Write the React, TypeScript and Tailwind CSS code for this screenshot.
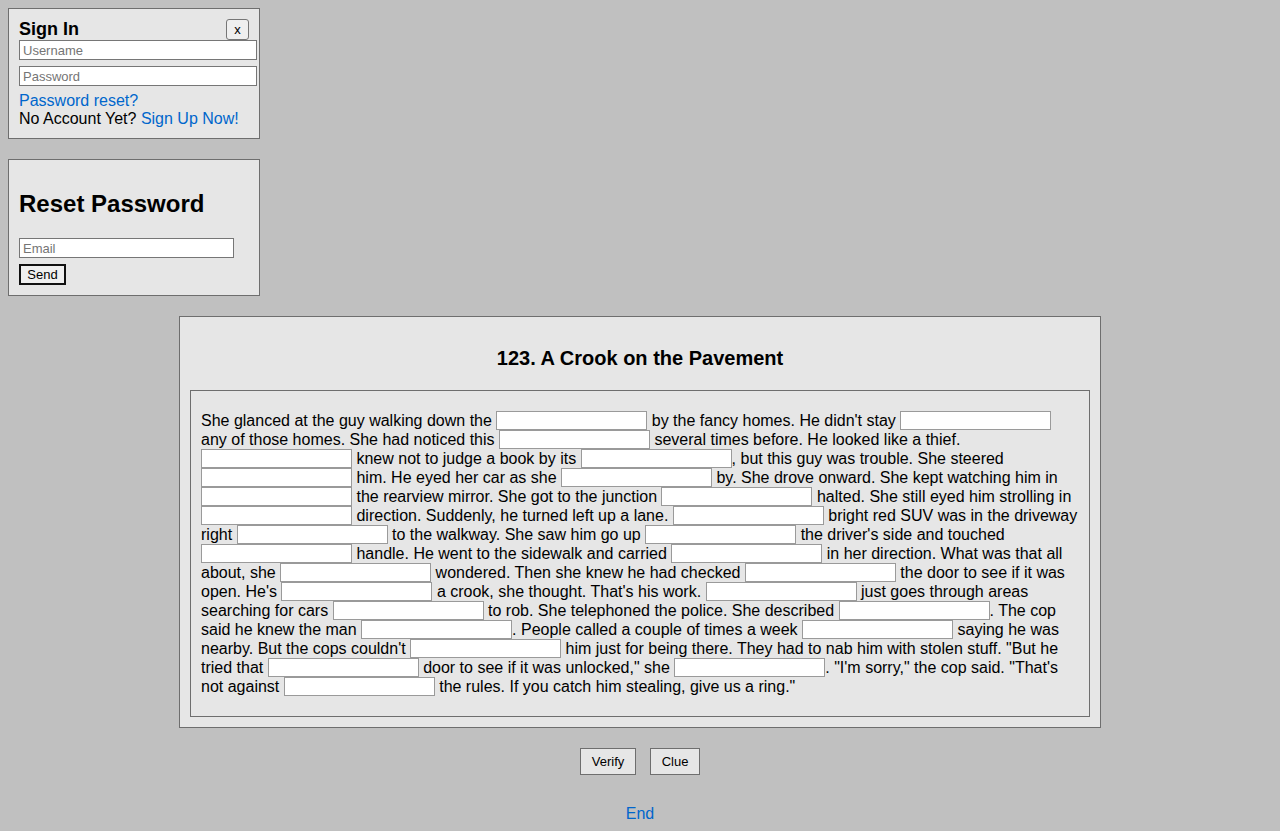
import React from "react";

const story: string[] = [
  "She glanced at the guy walking down the ",
  " by the fancy homes. He didn't stay ",
  " any of those homes. She had noticed this ",
  " several times before. He looked like a thief. ",
  " knew not to judge a book by its ",
  ", but this guy was trouble. She steered ",
  " him. He eyed her car as she ",
  " by. She drove onward. She kept watching him in ",
  " the rearview mirror. She got to the junction ",
  " halted. She still eyed him strolling in ",
  " direction. Suddenly, he turned left up a lane. ",
  " bright red SUV was in the driveway right ",
  " to the walkway. She saw him go up ",
  " the driver's side and touched ",
  " handle. He went to the sidewalk and carried ",
  " in her direction. What was that all about, she ",
  " wondered. Then she knew he had checked ",
  " the door to see if it was open. He's ",
  " a crook, she thought. That's his work. ",
  " just goes through areas searching for cars ",
  " to rob. She telephoned the police. She described ",
  ". The cop said he knew the man ",
  ". People called a couple of times a week ",
  " saying he was nearby. But the cops couldn't ",
  " him just for being there. They had to nab him with stolen stuff. \"But he tried that ",
  " door to see if it was unlocked,\" she ",
  ". \"I'm sorry,\" the cop said. \"That's not against ",
  " the rules. If you catch him stealing, give us a ring.\"",
];

const Blank = () => (
  <input
    type="text"
    className="inline-block w-[151px] h-[19px] align-top border border-[#9a9a9a] bg-white px-1 text-[13px] leading-[17px] outline-none"
  />
);

const SignInBox = () => (
  <div className="w-[252px] border border-[#6e6e6e] bg-[#e6e6e6] px-[10px] py-[10px]">
    <div className="flex items-start justify-between">
      <h3 className="text-[18px] font-bold leading-[21px]">Sign In</h3>
      <button className="h-[21px] w-[23px] rounded-[3px] border border-[#767676] bg-[#efefef] text-[13px] leading-none">
        x
      </button>
    </div>
    <div className="flex flex-col gap-[6px]">
      <input
        placeholder="Username"
        className="h-[20px] w-[238px] border border-[#767676] bg-white px-[3px] text-[13px] placeholder:text-[#757575]"
      />
      <input
        placeholder="Password"
        type="password"
        className="h-[20px] w-[238px] border border-[#767676] bg-white px-[3px] text-[13px] placeholder:text-[#757575]"
      />
    </div>
    <div className="mt-[6px] text-[16px] leading-[18px]">
      <a className="text-[#0066cc]">Password reset?</a>
      <div>
        No Account Yet? <a className="text-[#0066cc]">Sign Up Now!</a>
      </div>
    </div>
  </div>
);

const ResetBox = () => (
  <div className="mt-[20px] w-[252px] border border-[#6e6e6e] bg-[#e6e6e6] p-[10px]">
    <h2 className="mt-[20px] mb-[20px] text-[24px] font-bold leading-[28px]">Reset Password</h2>
    <input
      placeholder="Email"
      className="block h-[20px] w-[215px] border border-[#767676] bg-white px-[3px] text-[13px] placeholder:text-[#757575]"
    />
    <button className="mt-[6px] block h-[21px] w-[47px] border-2 border-[#111] bg-[#efefef] text-[13px] leading-none">
      Send
    </button>
  </div>
);

export default function App() {
  return (
    <div
      className="min-h-[831px] bg-[#c0c0c0] p-[8px] text-black"
      style={{ fontFamily: '"Liberation Sans", Arial, sans-serif' }}
    >
      <SignInBox />
      <ResetBox />

      <div className="mx-auto mt-[20px] w-[922px] border border-[#6e6e6e] bg-[#e6e6e6] p-[10px]">
        <h3 className="mt-[20px] mb-[20px] text-center text-[20px] font-bold leading-[23px]">
          123. A Crook on the Pavement
        </h3>
        <div className="border border-[#6e6e6e] px-[10px] py-[20px]">
          <p className="text-[16px] leading-[19px]">
            {story.map((part, i) => (
              <React.Fragment key={i}>
                {part}
                {i < story.length - 1 && <Blank />}
              </React.Fragment>
            ))}
          </p>
        </div>
      </div>

      <div className="mt-[20px] flex justify-center gap-[14px]">
        <button className="h-[27px] w-[56px] border border-[#6e6e6e] bg-[#e6e6e6] text-[13px]">Verify</button>
        <button className="h-[27px] w-[50px] border border-[#6e6e6e] bg-[#e6e6e6] text-[13px]">Clue</button>
      </div>

      <div className="mt-[29px] text-center text-[16px] leading-[19px]">
        <a className="text-[#0066cc]">End</a>
      </div>
    </div>
  );
}
